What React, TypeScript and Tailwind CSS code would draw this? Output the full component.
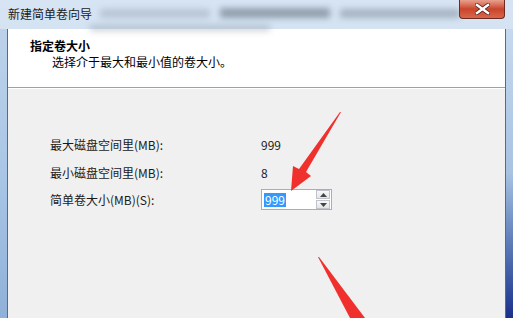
export default function App() {
  const cjk = { fontFamily: '"Noto Sans CJK SC", "Liberation Sans", sans-serif' }
  return (
    <div
      className="relative w-[513px] h-[318px] overflow-hidden flex flex-col bg-gradient-to-b from-[#d6e4f3] to-[#c3d6ec] text-black"
      style={cjk}
    >
      {/* Title bar (blurred glass) */}
      <div className="relative h-[29px] flex items-start shrink-0">
        <div className="absolute left-[100px] top-[9px] w-[110px] h-[9px] bg-[#8a98a8] opacity-40 blur-[3px]" />
        <div className="absolute left-[220px] top-[8px] w-[110px] h-[10px] bg-[#3e4a58] opacity-45 blur-[3px]" />
        <div className="absolute left-[340px] top-[9px] w-[120px] h-[9px] bg-[#5e6a78] opacity-40 blur-[3px]" />
        <div className="absolute left-[90px] top-[25px] w-[180px] h-[6px] bg-[#7f8c9a] opacity-40 blur-[3px]" />
        <span className="relative ml-[8px] mt-[6px] text-[12px] leading-[16px] text-[#1a1a1a]">新建简单卷向导</span>
        <div className="relative ml-auto mr-[8px] w-[46px] h-[19px] rounded-b-[4px] border border-t-0 border-[#6b2a22] bg-gradient-to-b from-[#e8a08e] via-[#c9442b] to-[#d8664a] flex items-center justify-center">
          <svg width="15" height="12" viewBox="0 0 15 12">
            <path d="M2 2 L13 10 M13 2 L2 10" stroke="#4a1a14" strokeWidth="4" strokeLinecap="square" />
            <path d="M2 2 L13 10 M13 2 L2 10" stroke="#ffffff" strokeWidth="2.6" strokeLinecap="square" />
          </svg>
        </div>
      </div>

      {/* Window body */}
      <div className="flex flex-1 min-h-0">
        <div className="w-[7px] bg-gradient-to-b from-[#bcd2ea] via-[#a9c6e6] to-[#8fb0d8]" />
        <div className="flex-1 flex flex-col border-x border-[#5a6b7e] bg-[#f0f0f0]">
          <div className="h-[59px] bg-white border-b border-[#a0a0a0] shadow-[0_1px_0_#ffffff] pl-[22px] pt-[9px] text-[12px] leading-[16px]">
            <div className="font-bold">指定卷大小</div>
            <div className="pl-[22px]">选择介于最大和最小值的卷大小。</div>
          </div>
          <div className="pl-[42px] pt-[43px] text-[12px] leading-[16px] text-[#1a1a1a]">
            <div className="flex items-center h-[28px]">
              <span className="w-[211px]">最大磁盘空间里(MB):</span>
              <span>999</span>
            </div>
            <div className="flex items-center h-[27px]">
              <span className="w-[211px]">最小磁盘空间里(MB):</span>
              <span>8</span>
            </div>
            <div className="flex items-center h-[27px]">
              <span className="w-[211px]">简单卷大小(MB)(S):</span>
              <div className="w-[71px] h-[21px] border border-[#abadb3] bg-white flex items-center">
                <span className="ml-[2px] bg-[#3399ff] text-white px-px leading-[14px]">999</span>
                <div className="ml-auto mr-[1px] flex flex-col gap-px">
                  <div className="w-[14px] h-[9px] border border-[#c0c4ca] bg-gradient-to-b from-[#f8f8f8] to-[#e2e4e8] flex items-center justify-center">
                    <svg width="7" height="4" viewBox="0 0 7 4"><path d="M3.5 0 L7 4 L0 4 Z" fill="#444" /></svg>
                  </div>
                  <div className="w-[14px] h-[9px] border border-[#c0c4ca] bg-gradient-to-b from-[#f8f8f8] to-[#e2e4e8] flex items-center justify-center">
                    <svg width="7" height="4" viewBox="0 0 7 4"><path d="M0 0 L7 0 L3.5 4 Z" fill="#444" /></svg>
                  </div>
                </div>
              </div>
            </div>
          </div>
        </div>
        <div className="w-[7px] bg-gradient-to-b from-[#c6d9ee] via-[#a8c2e2] to-[#1c2f8a]" />
      </div>

      {/* Red annotation arrows */}
      <svg className="absolute left-0 top-0 pointer-events-none" width="513" height="318" viewBox="0 0 513 318">
        <polygon points="341,112 306,172 311,176 291,191 293,166 299,169 340,112" fill="#f0302c" />
        <polygon points="318,257 319,257 365,318 350,318" fill="#f0302c" />
      </svg>
    </div>
  )
}
